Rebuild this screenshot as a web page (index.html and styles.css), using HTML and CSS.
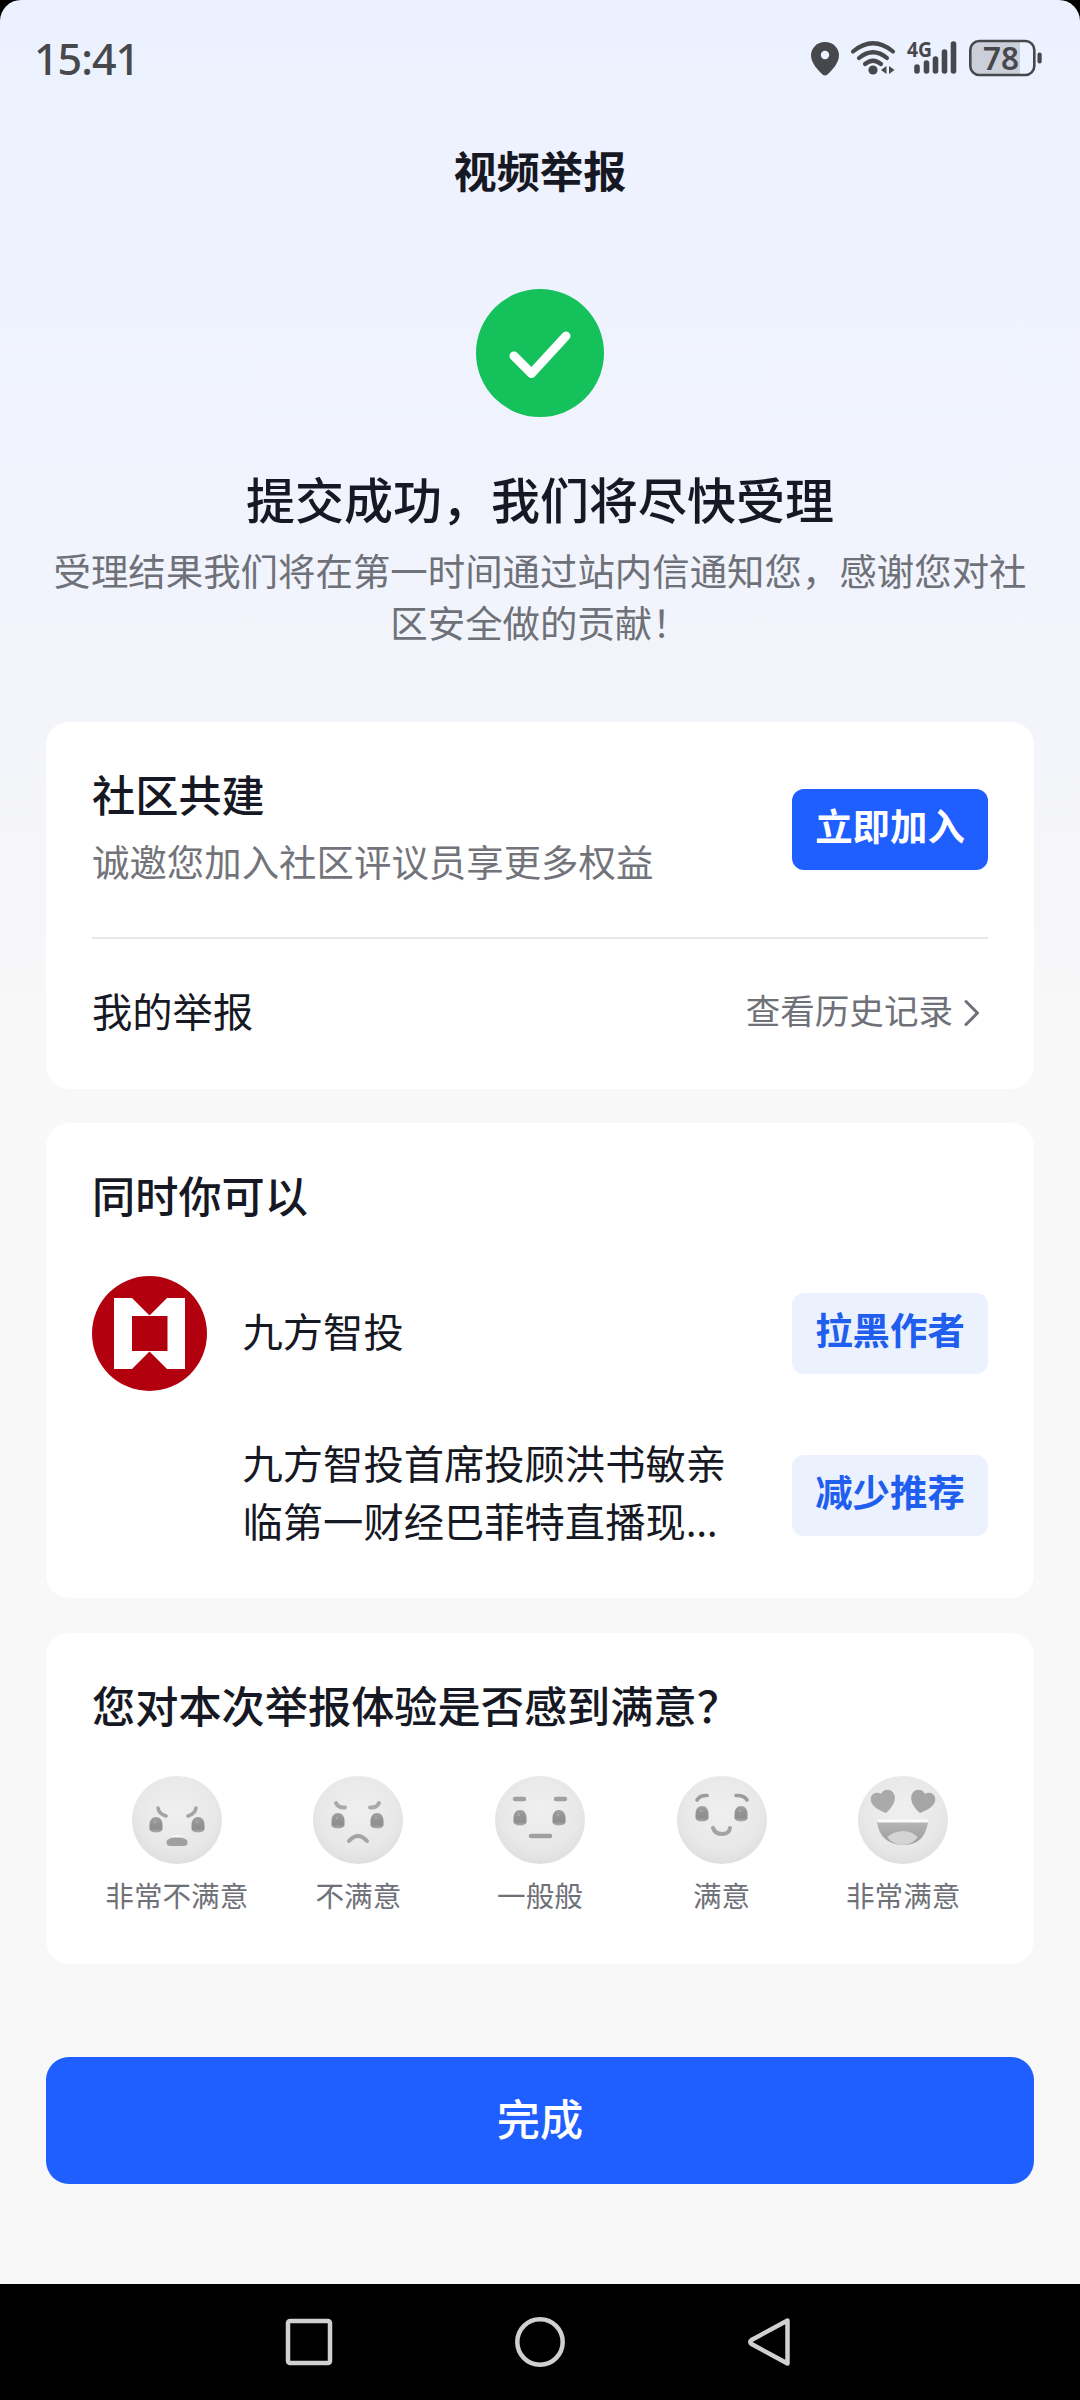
FILE: index.html
```html
<!DOCTYPE html>
<html lang="zh-CN">
<head>
<meta charset="utf-8">
<title>视频举报</title>
<link rel="stylesheet" href="styles.css">
</head>
<body>
<div class="screen">
  <div class="page">
    <header class="status">
      <div class="time">15:41</div>
      <svg class="status-icons" width="240" height="44" viewBox="0 0 240 44" fill="none">
        <path d="M15 2C7 2 1 8 1 15.500C1 23 8 30 12.500 34.500Q15 36.500 17.500 34.500C22 30 29 23 29 15.500C29 8 23 2 15 2Z" fill="#47484c"/>
        <circle cx="15" cy="15" r="4.200" fill="#edf2fe"/>
        <g stroke="#47484c" stroke-width="4.200" stroke-linecap="round">
          <path d="M43 11.500Q63 -5 83 11.500"/><path d="M49 18Q63 6.500 77 18"/><path d="M55 24Q63 17.500 71 24"/>
        </g>
        <circle cx="63" cy="30" r="4.600" fill="#47484c"/>
        <path d="M76.500 26V34L71 30ZM79 26V34L84.500 30Z" fill="#47484c"/>
        <text class="network" x="97" y="17" textLength="25" lengthAdjust="spacingAndGlyphs">4G</text>
        <g stroke="#47484c" stroke-width="5.600" stroke-linecap="round">
          <path d="M107 27V31M116.500 23V31M125.500 19V31M134.500 12V31M143.500 4V31"/>
        </g>
        <path d="M170 2H210V34H170Q161 34 161 25V11Q161 2 170 2Z" fill="#cbcfd9"/>
        <rect x="160.300" y="1" width="64" height="34" rx="9" stroke="#47484c" stroke-width="2.600"/>
        <rect x="227.500" y="12.500" width="4.200" height="11" rx="2" fill="#47484c"/>
        <text class="battery" x="173" y="29.500" textLength="36" lengthAdjust="spacingAndGlyphs">78</text>
      </svg>
    </header>

    <h1 class="title">视频举报</h1>

    <section class="result">
      <svg class="success" width="128" height="128" viewBox="0 0 128 128" fill="none">
        <circle cx="64" cy="64" r="64" fill="#15c15b"/>
        <path d="M38 67L55.500 84.500L90 47" stroke="#fff" stroke-width="9" stroke-linecap="round" stroke-linejoin="round"/>
      </svg>
      <h2 class="headline">提交成功，我们将尽快受理</h2>
      <p class="desc">受理结果我们将在第一时间通过站内信通知您，感谢您对社区安全做的贡献！</p>
    </section>

    <section class="card community">
      <div class="join">
        <div class="intro">
          <h3 class="card-title">社区共建</h3>
          <p class="card-sub">诚邀您加入社区评议员享更多权益</p>
        </div>
        <button class="btn primary">立即加入</button>
      </div>
      <div class="history">
        <span class="label">我的举报</span>
        <span class="link"><span>查看历史记录</span>
          <svg width="20" height="30" viewBox="0 0 20 30" fill="none"><path d="M3 3.500L14.500 15L3 26.500" stroke="#6f7179" stroke-width="3" stroke-linecap="round" stroke-linejoin="round"/></svg>
        </span>
      </div>
    </section>

    <section class="card actions">
      <h3 class="card-title">同时你可以</h3>
      <div class="row author">
        <svg width="115" height="115" viewBox="0 0 115 115">
          <circle cx="57.500" cy="57.500" r="57.500" fill="#b3000f"/>
          <path d="M22 22H40L57.500 39.500L75 22H93V93H75L57.500 75.500L40 93H22Z" fill="#fff"/>
          <rect x="40" y="40" width="35.500" height="35" fill="#b3000f"/>
        </svg>
        <span class="label name">九方智投</span>
        <button class="btn">拉黑作者</button>
      </div>
      <div class="row video">
        <span class="thumb"></span>
        <p class="label name">九方智投首席投顾洪书敏亲<br>临第一财经巴菲特直播现<span class="ellipsis">…</span></p>
        <button class="btn">减少推荐</button>
      </div>
    </section>

    <section class="card survey">
      <svg width="0" height="0" class="defs">
        <defs>
          <radialGradient id="face" cx=".5" cy=".4" r=".62"><stop offset="0" stop-color="#f0f0f0"/><stop offset=".7" stop-color="#e8e8e8"/><stop offset="1" stop-color="#dedede"/></radialGradient>
          <linearGradient id="eye" x1="0" y1="0" x2="0" y2="1"><stop offset="0" stop-color="#a0a0a0"/><stop offset=".4" stop-color="#949494"/><stop offset=".75" stop-color="#8e8e8e"/><stop offset="1" stop-color="#aaa"/></linearGradient>
          <linearGradient id="mouth" x1="0" y1="0" x2="0" y2="1"><stop offset="0" stop-color="#b5b5b5"/><stop offset="1" stop-color="#9b9b9b"/></linearGradient>
          <g id="ball"><ellipse cx="45" cy="44" rx="45" ry="44" fill="url(#face)"/></g>
          <g id="pupil"><path d="M-6.500 0C-6.500 -4.500 -4 -8 0 -8C4 -8 6.500 -4.500 6.500 0V4C6.500 8.500 -6.500 8.500 -6.500 4Z" fill="url(#eye)"/><circle cx="-1" cy="-3" r="1.100" fill="#b0b0b0"/></g>
          <path id="heart" d="M3 12C-5 9 -14 4 -12 -4C-10 -9 -5 -9 -2 -7C0 -12 8 -13 11 -7C14 -1 9 7 3 12Z"/>
        </defs>
      </svg>
      <h3 class="card-title">您对本次举报体验是否感到满意？</h3>
      <div class="faces">
        <div class="face">
          <svg width="90" height="88" viewBox="0 0 90 88" fill="none">
            <use href="#ball"/><use href="#pupil" x="24" y="49"/><use href="#pupil" x="66" y="49"/>
            <path d="M26 32Q27 38 34 40M64 32Q63 38 56 40" stroke="#a4a4a4" stroke-width="3.600" stroke-linecap="round"/>
            <path d="M35 64Q45 57 55 64Q57 70 51 70H39Q33 70 35 64Z" fill="#a0a0a0"/><path d="M38 61.500Q45 56 52 61.500Z" fill="#f7f7f7"/>
          </svg>
          <span>非常不满意</span>
        </div>
        <div class="face">
          <svg width="90" height="88" viewBox="0 0 90 88" fill="none">
            <use href="#ball"/><use href="#pupil" x="25" y="45"/><use href="#pupil" x="64" y="45"/>
            <path d="M23 27Q25 32 32 31.500M66 27Q64 32 57 31.500" stroke="#aaa" stroke-width="4" stroke-linecap="round"/>
            <path d="M36 65Q45 55 54 65" stroke="#a4a4a4" stroke-width="4" stroke-linecap="round"/>
          </svg>
          <span>不满意</span>
        </div>
        <div class="face">
          <svg width="90" height="88" viewBox="0 0 90 88" fill="none">
            <use href="#ball"/><use href="#pupil" x="25" y="42"/><use href="#pupil" x="64" y="42"/>
            <path d="M20 23H29M61 23H70M36 60H55" stroke="#a0a0a0" stroke-width="4.400" stroke-linecap="round"/>
          </svg>
          <span>一般般</span>
        </div>
        <div class="face">
          <svg width="90" height="88" viewBox="0 0 90 88" fill="none">
            <use href="#ball"/><use href="#pupil" x="25" y="38"/><use href="#pupil" x="64" y="38"/>
            <path d="M20 24Q23 19 30 19.500M59 19.500Q67 19 70 24" stroke="#9c9c9c" stroke-width="3.600" stroke-linecap="round"/>
            <path d="M36 52Q38 58 45 58Q52 58 53 52" stroke="#a4a4a4" stroke-width="4" stroke-linecap="round"/>
          </svg>
          <span>满意</span>
        </div>
        <div class="face">
          <svg width="90" height="88" viewBox="0 0 90 88" fill="none">
            <use href="#ball"/>
            <use href="#heart" x="25" y="25" fill="#aaa"/><use href="#heart" fill="#a6a6a6" transform="translate(65 25) scale(-1 1)"/>
            <path d="M19 46H70Q67 69 45 69Q22 68 19 46Z" fill="url(#mouth)"/><path d="M29 61Q37 55 45 55Q53 55 60 61Q54 69 45 69Q35 69 29 61Z" fill="#d4d4d4"/>
            <path d="M19 43.500H70V46.500H20Z" fill="#fafafa"/>
          </svg>
          <span>非常满意</span>
        </div>
      </div>
    </section>

    <button class="done">完成</button>
  </div>

  <nav class="navbar">
    <svg width="52" height="52" viewBox="0 0 52 52" fill="none"><rect x="5" y="5" width="42" height="42" rx="2" stroke="#d0d0d0" stroke-width="4.500"/></svg>
    <svg width="52" height="52" viewBox="0 0 52 52" fill="none"><circle cx="26" cy="26" r="22.700" stroke="#d0d0d0" stroke-width="4.500"/></svg>
    <svg width="52" height="52" viewBox="0 0 52 52" fill="none"><path d="M42.500 4.500L6.500 24Q4 26 6.500 28L42.500 47.500Z" stroke="#d0d0d0" stroke-width="4.500" stroke-linejoin="round"/></svg>
  </nav>
</div>
</body>
</html>
```
FILE: styles.css
```css
* { box-sizing: border-box; margin: 0; padding: 0; }

body {
  width: 1080px;
  background: #000;
  color: #161823;
  font-family: "Noto Sans CJK SC", sans-serif;
}

button { border: 0; font-family: inherit; }
svg { display: block; flex: none; overflow: visible; }

.screen { height: 2400px; display: flex; flex-direction: column; }

.page {
  flex: 1;
  padding: 0 46px;
  border-radius: 21px 21px 0 0;
  background: linear-gradient(#ebf1ff 0, #eef2fe 150px, #f1f4fd 560px, #f4f5fa 740px, #f8f8f8 1060px);
}

.status {
  height: 112px;
  margin: 0 -16px 0 -12px;
  padding-top: 40px;
  display: flex;
  justify-content: space-between;
}
.time { margin-top: -3px; font: 500 43px/44px "Noto Sans", sans-serif; letter-spacing: -1px; color: #47484c; }
.network { font: 700 22px "Noto Sans", sans-serif; fill: #47484c; }
.battery { font: 600 32px "Noto Sans", sans-serif; fill: #47484c; }

.title {
  height: 114px;
  font-size: 43.2px;
  line-height: 114px;
  font-weight: 700;
  text-align: center;
}

.result { height: 496px; padding-top: 63px; text-align: center; }
.success { margin: 0 auto; }
.headline { margin-top: 46px; font-size: 49px; line-height: 70px; font-weight: 500; }
.desc { margin: 11px -4px 0; font-size: 37.44px; line-height: 52px; color: #6f7179; }

.card { background: #fff; border-radius: 23px; padding: 0 46px; }
.card-title { font-size: 43.2px; line-height: 60px; font-weight: 500; }
.card-sub { margin-top: 12px; font-size: 37.44px; line-height: 52px; color: #73747b; }
.label { font-size: 40.3px; line-height: 58px; }

.btn {
  width: 196px;
  height: 81px;
  padding-bottom: 8px;
  border-radius: 12px;
  background: #ebf2fe;
  color: #1f5eee;
  font-size: 37.44px;
  line-height: 73px;
  font-weight: 700;
}
.btn.primary { background: #1f5eff; color: #fff; }

.community { height: 367px; }
.join {
  height: 217px;
  border-bottom: 2px solid #e8e8e9;
  display: flex;
  align-items: center;
  justify-content: space-between;
}
.intro { padding-bottom: 10px; }
.history { height: 144px; display: flex; align-items: center; justify-content: space-between; }
.history .label { padding-bottom: 3px; }
.link { display: flex; align-items: center; gap: 10px; padding-right: 5px; font-size: 34.56px; color: #6f7179; }
.link span { padding-bottom: 5px; }
.link svg { margin-top: 4px; }

.actions { height: 475px; margin-top: 34px; padding-top: 41px; }
.row { display: flex; align-items: center; justify-content: space-between; }
.author { margin-top: 52px; }
.video { margin-top: 42px; }
.thumb { width: 115px; }
.name { width: 486px; margin: 0 28px 7px 0; }
.video .name { margin-bottom: 9px; }
.ellipsis { font-family: "Noto Sans", sans-serif; line-height: 1; }

.survey { height: 331px; margin-top: 35px; padding-top: 41px; }
.faces { margin: 42px -6px 0; display: grid; grid-template-columns: repeat(5, 1fr); }
.face { display: flex; flex-direction: column; align-items: center; gap: 11px; font-size: 28.6px; line-height: 40px; color: #6f7179; }

.done {
  width: 100%;
  height: 127px;
  margin-top: 93px;
  padding-bottom: 8px;
  border-radius: 23px;
  background: #1f5eff;
  color: #fff;
  font-size: 43.2px;
  font-weight: 500;
}

.navbar {
  height: 116px;
  display: flex;
  align-items: center;
  justify-content: center;
  gap: 179px;
}
```
